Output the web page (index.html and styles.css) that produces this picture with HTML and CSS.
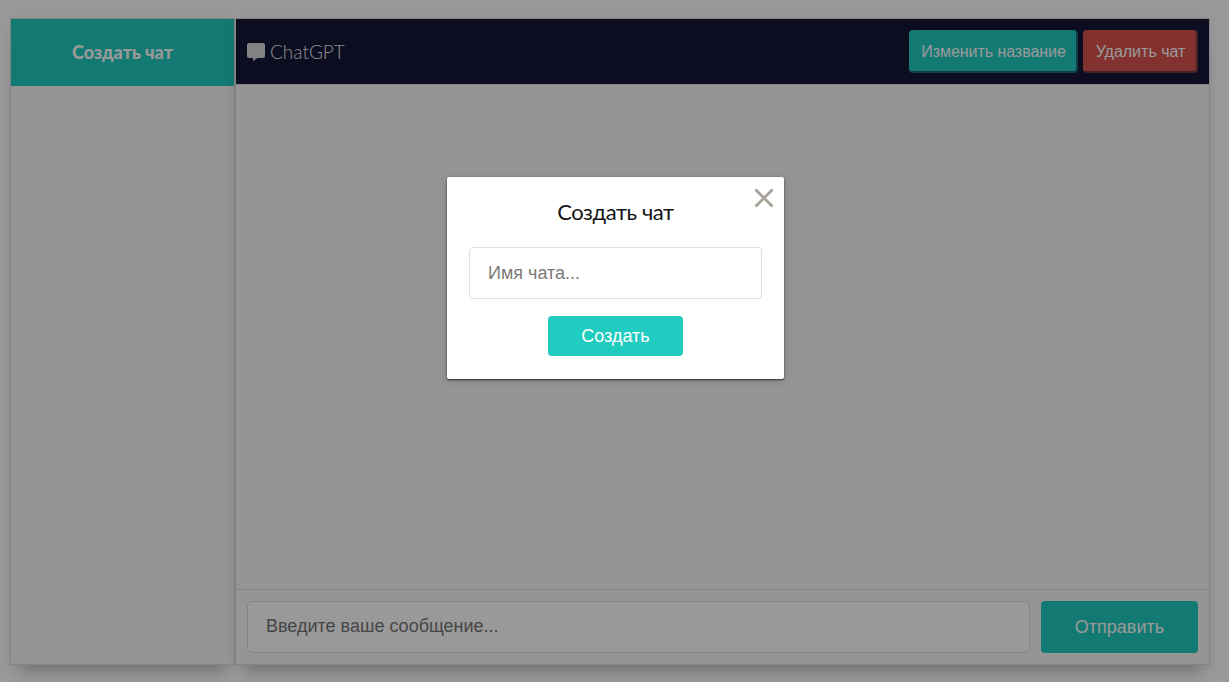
FILE: index.html
```html
<!DOCTYPE html>
<html lang="ru">
<head>
<meta charset="utf-8">
<title>ChatGPT</title>
<link rel="stylesheet" href="styles.css">
</head>
<body>
<div class="app">
  <aside class="sidebar"><button class="new-chat"><span class="new-chat-label">Создать чат</span></button></aside>
  <main class="chat">
    <header class="chat-header">
      <svg class="chat-icon" width="18" height="18" viewBox="0 0 18 18"><path fill="#d9d9d9" d="M2 0H16Q18 0 18 2V13Q18 15 16 15H10.500L6 18V15H2Q0 15 0 13V2Q0 0 2 0Z"/></svg>
      <h1 class="chat-title"><span class="chat-name">ChatGPT</span></h1>
      <button class="header-button rename"><span class="rename-label">Изменить название</span></button>
      <button class="header-button delete"><span class="delete-label">Удалить чат</span></button>
    </header>
    <section class="messages"></section>
    <form class="composer">
      <div class="message-input"><span class="message-hint">Введите ваше сообщение...</span></div>
      <button class="send" type="button"><span class="send-label">Отправить</span></button>
    </form>
  </main>
</div>
<div class="overlay">
  <div class="dialog">
    <svg class="close" width="20" height="20" viewBox="0 0 20 20"><path d="M1.500 1.500L18.500 18.500M18.500 1.500L1.500 18.500" stroke="#aaa49b" stroke-width="3"/></svg>
    <h2 class="dialog-title"><span class="dialog-name">Создать чат</span></h2>
    <div class="name-input"><span class="name-hint">Имя чата...</span></div>
    <button class="create"><span class="create-label">Создать</span></button>
  </div>
</div>
</body>
</html>
```
FILE: styles.css
```css
* { box-sizing: border-box; }
body {
  margin: 0;
  height: 682px;
  overflow: hidden;
  background: #fff;
  font-family: "Liberation Sans", Arial, sans-serif;
}
button { border: 0; font-family: inherit; padding: 0; white-space: nowrap; }
.app { display: flex; height: 665px; padding: 18px 19px 0 10px; }
.sidebar, .chat {
  background: #f8f8f8;
  border: 1px solid #dcdde0;
  box-shadow: 0 15px 15px -10px rgba(40, 45, 60, .32), 0 2px 16px rgba(0, 0, 0, .06);
}
.sidebar { width: 225px; }
.new-chat {
  display: block;
  width: 100%;
  height: 67px;
  background: #20cbc0;
  color: #fff;
  font: 900 18px/67px Lato, sans-serif;
}
.chat { flex: 1; display: flex; flex-direction: column; }
.chat-header {
  display: flex;
  align-items: center;
  height: 66px;
  padding: 0 11px;
  background: #171738;
  border-bottom: 1px solid #dcdde0;
}
.chat-icon { margin-right: 5px; }
.chat-title { flex: 1; margin: 0; color: #e8e8e8; font: 300 19px/24px Lato, sans-serif; }
.header-button {
  height: 43px;
  border-radius: 4px;
  color: #fff;
  font-size: 16px;
}
.rename { width: 169px; padding: 2px 0 0 2px; letter-spacing: -.05px; background: #20cbc0; border: solid #186f79; border-width: 0 2px 2px 0; }
.delete { width: 115px; padding: 2px 0 0 2px; margin-left: 5px; background: #d9534f; border: solid #733b42; border-width: 0 2px 2px 0; }
.messages { flex: 1; }
.composer {
  display: flex;
  gap: 11px;
  height: 75px;
  padding: 11px;
  border-top: 1px solid #dcdde0;
}
.message-input {
  flex: 1;
  height: 52px;
  padding-left: 18px;
  border: 1px solid #dcdde0;
  border-radius: 5px;
  background: #fff;
  color: #757575;
  font-size: 18px;
  line-height: 49px;
}
.send { width: 157px; height: 52px; border-radius: 4px; background: #20cbc0; color: #fff; font-size: 18px; }
.overlay {
  position: absolute;
  inset: 0;
  display: flex;
  justify-content: center;
  align-items: flex-start;
  padding: 177px 0 0 2px;
  background: rgba(0, 0, 0, .4);
}
.dialog {
  position: relative;
  display: flex;
  flex-direction: column;
  align-items: center;
  width: 337px;
  height: 202px;
  padding: 21px 22px 22px;
  border-radius: 2px;
  background: #fff;
  box-shadow: 0 1px 2px rgba(0, 0, 0, .65), 0 2px 8px rgba(0, 0, 0, .15);
}
.close { position: absolute; top: 11px; right: 10px; }
.dialog-title { margin: 0 0 21px; color: #151515; font: 400 22px/28px Lato, sans-serif; letter-spacing: -.42px; }
.name-input {
  width: 100%;
  height: 52px;
  padding-left: 18px;
  border: 1px solid #d5e2e9;
  border-radius: 4px;
  color: #7b7b75;
  font-size: 18px;
  line-height: 50px;
}
.create { width: 135px; height: 40px; margin-top: 17px; border-radius: 4px; background: #20cbc0; color: #fff; font-size: 18px; }
```
